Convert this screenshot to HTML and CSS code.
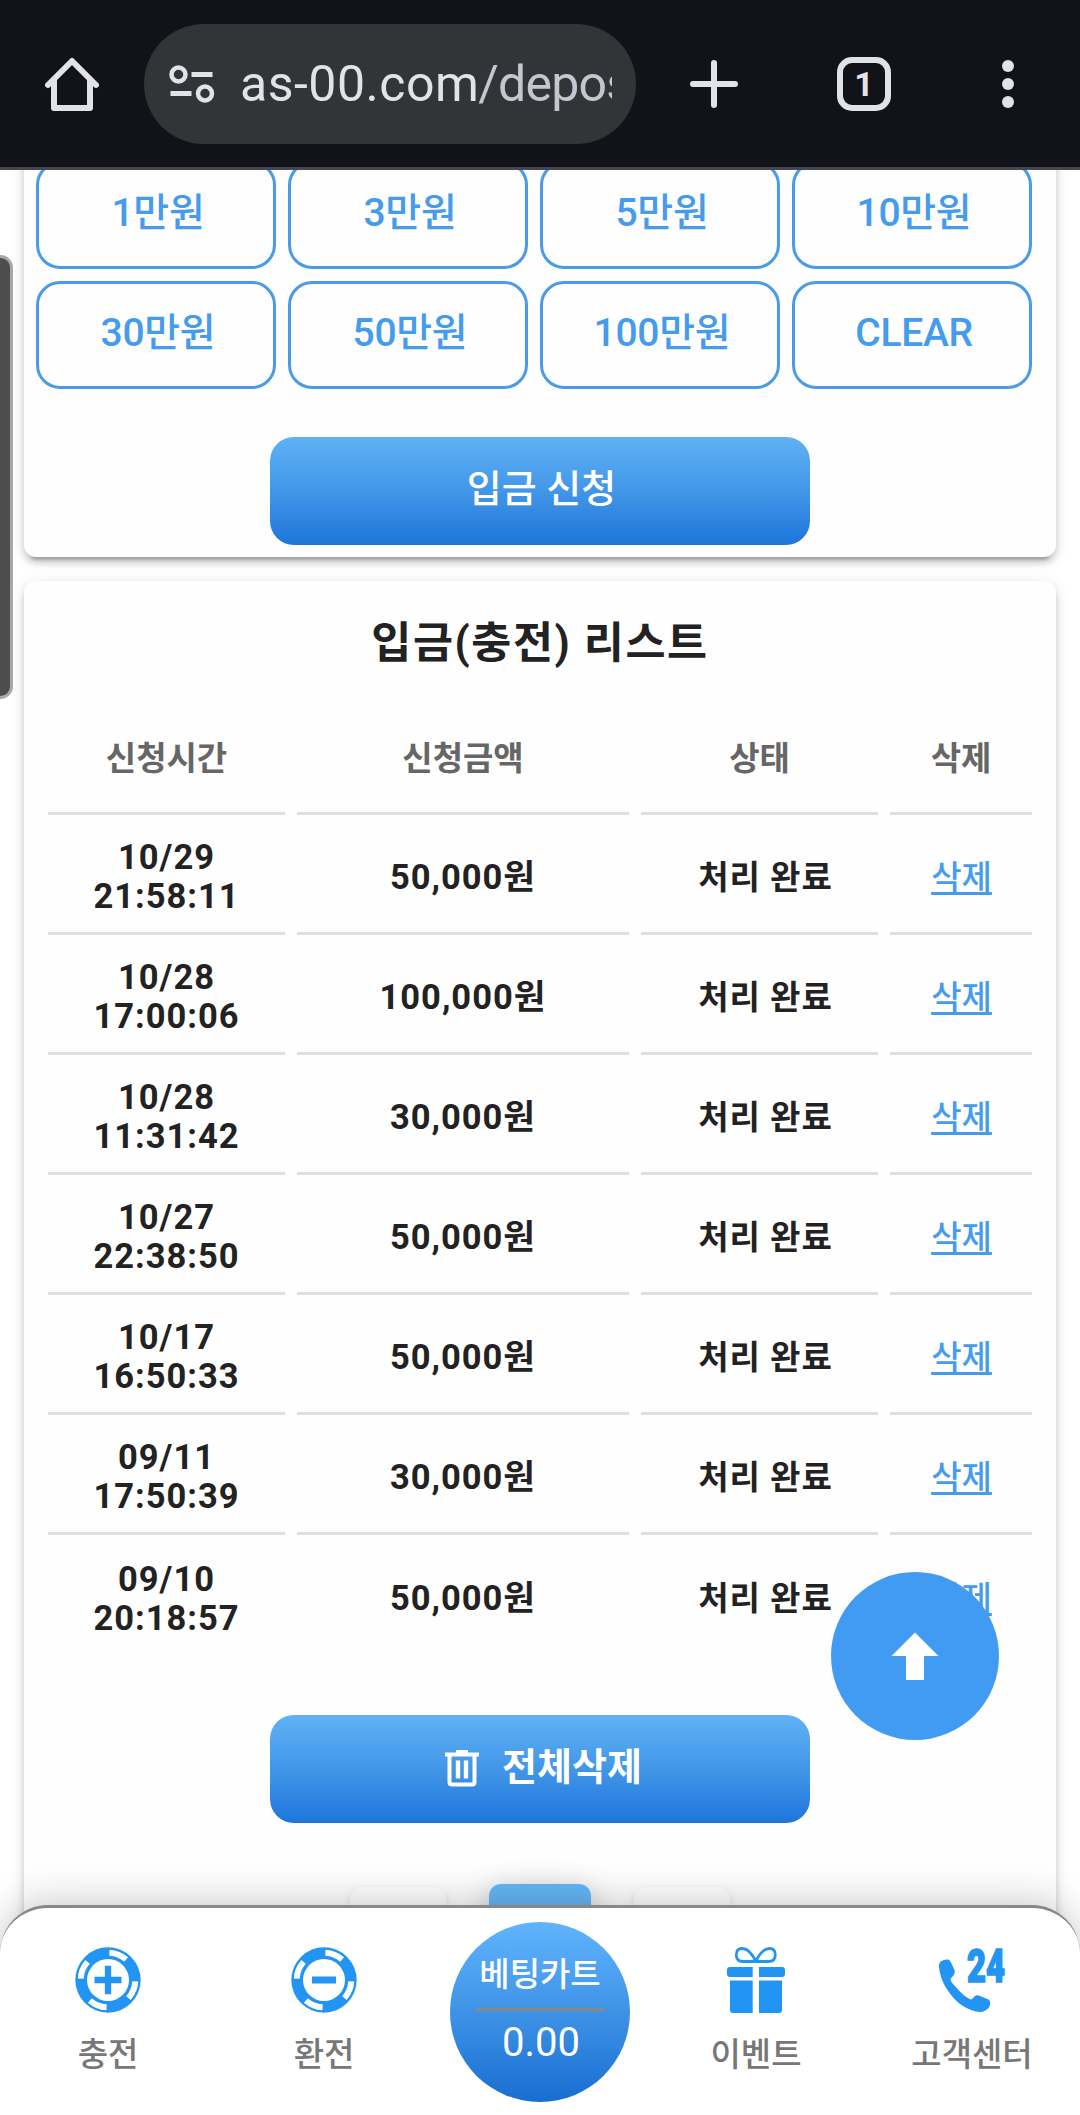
FILE: index.html
```html
<!DOCTYPE html>
<html lang="ko">
<head>
<meta charset="utf-8">
<title>입금(충전)</title>
<link rel="stylesheet" href="styles.css">
</head>
<body>
<header class="browser-bar">
  <svg class="icon-home" width="54" height="54" viewBox="0 0 54 54"><path d="M3 28 27 4 51 28M9 23V51H45V23" fill="none" stroke="#e2e2e9" stroke-width="6" stroke-linecap="round" stroke-linejoin="round"/></svg>
  <div class="omnibox">
    <svg width="46" height="38" viewBox="0 0 46 38" fill="none" stroke="#e2e2e9"><circle cx="9.500" cy="9.500" r="7" stroke-width="4.500"/><circle cx="36" cy="28.500" r="7" stroke-width="4.500"/><path d="M22.500 9.500H43.500M1.500 28.500H22.500" stroke-width="5"/></svg>
    <div class="url">as-00.com<span>/deposit</span></div>
  </div>
  <svg class="icon-plus" width="48" height="48" viewBox="0 0 48 48"><path d="M24 3V45M3 24H45" stroke="#e2e2e9" stroke-width="6" stroke-linecap="round"/></svg>
  <div class="tabs">1</div>
  <svg class="icon-more" width="12" height="48" viewBox="0 0 12 48" fill="#e2e2e9"><circle cx="6" cy="6" r="6"/><circle cx="6" cy="24" r="6"/><circle cx="6" cy="42" r="6"/></svg>
</header>

<main class="page">
  <section class="card amount-card">
    <div class="amounts">
      <button>1만원</button><button>3만원</button><button>5만원</button><button>10만원</button>
      <button>30만원</button><button>50만원</button><button>100만원</button><button>CLEAR</button>
    </div>
    <button class="primary">입금 신청</button>
  </section>

  <section class="card list-card">
    <h1>입금(충전) 리스트</h1>
    <div class="table">
      <div class="row head"><div>신청시간</div><div>신청금액</div><div>상태</div><div>삭제</div></div>
      <div class="row"><div>10/29<br>21:58:11</div><div>50,000원</div><div class="state">처리 완료</div><div><a>삭제</a></div></div>
      <div class="row"><div>10/28<br>17:00:06</div><div>100,000원</div><div class="state">처리 완료</div><div><a>삭제</a></div></div>
      <div class="row"><div>10/28<br>11:31:42</div><div>30,000원</div><div class="state">처리 완료</div><div><a>삭제</a></div></div>
      <div class="row"><div>10/27<br>22:38:50</div><div>50,000원</div><div class="state">처리 완료</div><div><a>삭제</a></div></div>
      <div class="row"><div>10/17<br>16:50:33</div><div>50,000원</div><div class="state">처리 완료</div><div><a>삭제</a></div></div>
      <div class="row"><div>09/11<br>17:50:39</div><div>30,000원</div><div class="state">처리 완료</div><div><a>삭제</a></div></div>
      <div class="row"><div>09/10<br>20:18:57</div><div>50,000원</div><div class="state">처리 완료</div><div><a>삭제</a></div></div>
    </div>
    <button class="primary delete-all">
      <svg width="34" height="37" viewBox="0 0 34 37" fill="none" stroke="#fff"><path d="M0 4.500H34" stroke-width="4"/><path d="M11 1.700H23" stroke-width="3.400"/><path d="M4.500 4V32Q4.500 34.500 7 34.500H27Q29.500 34.500 29.500 32V4" stroke-width="4"/><path d="M13 10.500V28.500M21 10.500V28.500" stroke-width="4.400"/></svg>
      <span>전체삭제</span>
    </button>
    <div class="pager"><i></i><i class="active"></i><i></i></div>
  </section>

  <div class="scrollbar"></div>
  <button class="to-top"><svg width="48" height="48" viewBox="0 0 48 48"><path d="M24 .5 47.500 24H33V48H15V24H.5Z" fill="#fff"/></svg></button>

  <nav class="bottom-nav">
    <a class="item">
      <svg width="66" height="66" viewBox="0 0 66 66"><circle cx="33" cy="33" r="32.700" fill="#2294f3"/><circle cx="33" cy="33" r="21" fill="#fff"/><circle cx="33" cy="33" r="27.300" fill="none" stroke="#fff" stroke-width="6" pathLength="171.500" class="chip-marks" transform="rotate(3 33 33)"/><path d="M33 18.700V47.300M19.500 33H46.500" stroke="#2294f3" stroke-width="6.300"/></svg>
      <span>충전</span>
    </a>
    <a class="item">
      <svg width="66" height="66" viewBox="0 0 66 66"><circle cx="33" cy="33" r="32.700" fill="#2294f3"/><circle cx="33" cy="33" r="21" fill="#fff"/><circle cx="33" cy="33" r="27.300" fill="none" stroke="#fff" stroke-width="6" pathLength="171.500" class="chip-marks" transform="rotate(3 33 33)"/><path d="M21 33H45" stroke="#2294f3" stroke-width="7"/></svg>
      <span>환전</span>
    </a>
    <div class="cart"><span>베팅카트</span><b>0.00</b></div>
    <a class="item">
      <svg width="66" height="66" viewBox="0 0 66 66" fill="#2294f3"><path d="M32.800 14.500C28 4 23 1.500 19 1.500C14.500 1.500 13.300 5 13.300 8C13.300 12 15.500 14.500 20 14.500ZM32.800 14.500C37.600 4 42.600 1.500 46.600 1.500C51 1.500 52.300 5 52.300 8C52.300 12 50 14.500 45.600 14.500Z" fill="none" stroke="#2294f3" stroke-width="2.800" stroke-linejoin="round"/><path d="M29.700 20V30H7Q4 30 4 27V23Q4 20 7 20ZM36 20H59Q62 20 62 23V27Q62 30 59 30H36ZM29.700 33.500V66H10Q7 66 7 63V33.500ZM36 33.500H59V63Q59 66 56 66H36Z"/></svg>
      <span>이벤트</span>
    </a>
    <a class="item">
      <svg width="66" height="66" viewBox="0 0 66 66" fill="#2294f3"><path d="M0 20C0 15 2 14 5 13C8 12 10.500 12 11.500 14.500L15.500 23C16.500 27 14.500 28 11.500 32C11.500 34 13 36 19.500 43C24 48 29 52 32.500 52.500L36 49C37 48 39 48.300 41 49L49.500 52.500C51.500 53.500 51.300 56 51 58C50 62 46 64.500 42 65C34 65 25 60.500 18 54.500C9 46 1 33 0 20Z"/><text x="28" y="35" textLength="38" lengthAdjust="spacingAndGlyphs" class="hours">24</text></svg>
      <span>고객센터</span>
    </a>
  </nav>
</main>
</body>
</html>
```
FILE: styles.css
```css
* { box-sizing: border-box; }
body {
  margin: 0;
  width: 1080px;
  height: 2115px;
  overflow: hidden;
  background: #fff;
  font-family: Roboto, "Noto Sans CJK KR", sans-serif;
}
button { font: inherit; border: 0; padding: 0; background: none; }
svg { display: block; flex: none; }

/* Browser toolbar */
.browser-bar {
  display: flex;
  align-items: center;
  height: 170px;
  padding: 0 66px 0 45px;
  background: #111318;
  border-bottom: 3px solid #45464f;
}
.omnibox {
  display: flex;
  align-items: center;
  width: 492px;
  height: 120px;
  margin: 0 54px 0 45px;
  padding: 0 24px 0 25px;
  border-radius: 60px;
  background: #333438;
}
.url {
  width: 372px;
  margin-left: 25px;
  overflow: hidden;
  white-space: nowrap;
  font: 400 50px/70px Roboto, sans-serif;
  letter-spacing: .5px;
  color: #e2e2e9;
}
.url span { margin-left: -1px; letter-spacing: -.8px; color: #c6c6d0; }
.tabs {
  width: 54px;
  height: 54px;
  margin: 0 111px 0 99px;
  border: 6px solid #e2e2e9;
  border-radius: 15px;
  text-align: center;
  font-weight: 700;
  font-size: 34px;
  line-height: 43px;
  color: #e2e2e9;
}

/* Page */
.page { position: relative; height: 1945px; overflow: hidden; }
.card {
  margin: 0 24px;
  border-radius: 12px;
  background: #fefefe;
  box-shadow: 0 9px 3px -6px rgba(0,0,0,.2), 0 6px 6px rgba(0,0,0,.14), 0 3px 15px rgba(0,0,0,.12);
}
.amount-card { margin-top: -30px; padding: 21px 12px 12px; height: 417px; }
.amounts {
  display: grid;
  grid-template-columns: repeat(4, 240px);
  grid-auto-rows: 108px;
  gap: 12px;
}
.amounts button {
  border: 3px solid #4a9be8;
  border-radius: 24px;
  padding: 0 0 5px 4px;
  font-weight: 500;
  font-size: 39px;
  line-height: 50px;
  letter-spacing: -.3px;
  color: #459bec;
}
.primary {
  display: flex;
  align-items: center;
  justify-content: center;
  width: 540px;
  height: 108px;
  margin: 48px auto 0;
  padding: 0 0 5px 3px;
  border-radius: 24px;
  background: linear-gradient(#60b1f5, #4296e8 50%, #1d76db);
  font-weight: 500;
  font-size: 38px;
  line-height: 50px;
  color: #fff;
}
.list-card { margin-top: 24px; height: 1600px; padding: 35px 24px 0; }
h1 {
  margin: 0;
  text-align: center;
  font-weight: 700;
  font-size: 43.5px;
  line-height: 56px;
  letter-spacing: 1.6px;
  color: #222;
}
.table { margin-top: 22px; }
.row {
  display: grid;
  grid-template-columns: 237px 332px 237px 142px;
  gap: 12px;
  width: 984px;
  height: 120px;
}
.row > div {
  display: flex;
  align-items: center;
  justify-content: center;
  padding-top: 7px;
  border-bottom: 3px solid #e0e0e0;
  text-align: center;
  font-weight: 700;
  font-size: 34.5px;
  line-height: 39px;
  letter-spacing: 1px;
  color: #222;
}
.row > .state { padding-left: 12px; font-size: 33px; }
.row.head { height: 121px; }
.row.head > div { padding-top: 11px; font-size: 33px; letter-spacing: 0; color: #666; }
.row:last-child { height: 121px; padding-top: 1px; }
.row:last-child > div { border-color: transparent; }
.row:last-child > div:first-child { padding-top: 9px; }
.row a {
  padding-left: 1px;
  font-weight: 500;
  font-size: 33px;
  letter-spacing: 0;
  color: #459bec;
  text-decoration: underline;
  text-decoration-thickness: 3px;
  text-underline-offset: 3px;
  text-decoration-skip-ink: none;
}
.delete-all { margin-top: 59px; padding-left: 7px; font-weight: 700; gap: 23px; }
.delete-all svg { margin-top: 3px; }
.pager {
  display: flex;
  justify-content: center;
  align-items: center;
  gap: 43px;
  margin-top: 61px;
}
.pager i {
  width: 96px;
  height: 96px;
  border-radius: 12px;
  background: #fefefe;
  box-shadow: 0 3px 9px rgba(0,0,0,.12);
}
.pager .active {
  width: 102px;
  height: 102px;
  background: #64b5f6;
  box-shadow: 0 6px 30px rgba(0,0,0,.24);
}

/* Overlays */
.scrollbar {
  position: absolute;
  left: -12px;
  top: 85px;
  width: 25px;
  height: 444px;
  border: 3px solid #a8a8a8;
  border-radius: 14px;
  background: #4d4d4d;
}
.to-top {
  position: absolute;
  left: 831px;
  top: 1402px;
  display: flex;
  align-items: center;
  justify-content: center;
  width: 168px;
  height: 168px;
  border-radius: 50%;
  background: #419bf3;
}
.bottom-nav {
  position: absolute;
  left: 0;
  bottom: 0;
  display: grid;
  grid-template-columns: repeat(5, 216px);
  width: 1080px;
  height: 210px;
  border-top: 3px solid #888;
  border-radius: 48px 48px 0 0;
  background: #fff;
  box-shadow: 0 0 42px rgba(0,0,0,.24);
}
.item {
  display: flex;
  flex-direction: column;
  align-items: center;
  padding-top: 39px;
  font-weight: 500;
  font-size: 33px;
  line-height: 40px;
  color: #777;
}
.item span { margin-top: 22px; }
.chip-marks { stroke-dasharray: 18.4 24.475; }
.hours { font: 900 46px Roboto, sans-serif; stroke: #2294f3; stroke-width: 1.6px; }
.cart {
  display: flex;
  flex-direction: column;
  align-items: center;
  justify-self: center;
  width: 180px;
  height: 180px;
  margin-top: 14px;
  border-radius: 50%;
  background: linear-gradient(#60b4fd, #4296e8 45%, #186ed1);
  color: #fff;
}
.cart span {
  width: 128px;
  height: 89px;
  padding-top: 32px;
  border-bottom: 3px solid #888;
  text-align: center;
  font-weight: 500;
  font-size: 33px;
  line-height: 42px;
  white-space: nowrap;
}
.cart b { font-weight: 400; font-size: 40px; line-height: 50px; margin: 7px 0 0 2px; }
```
